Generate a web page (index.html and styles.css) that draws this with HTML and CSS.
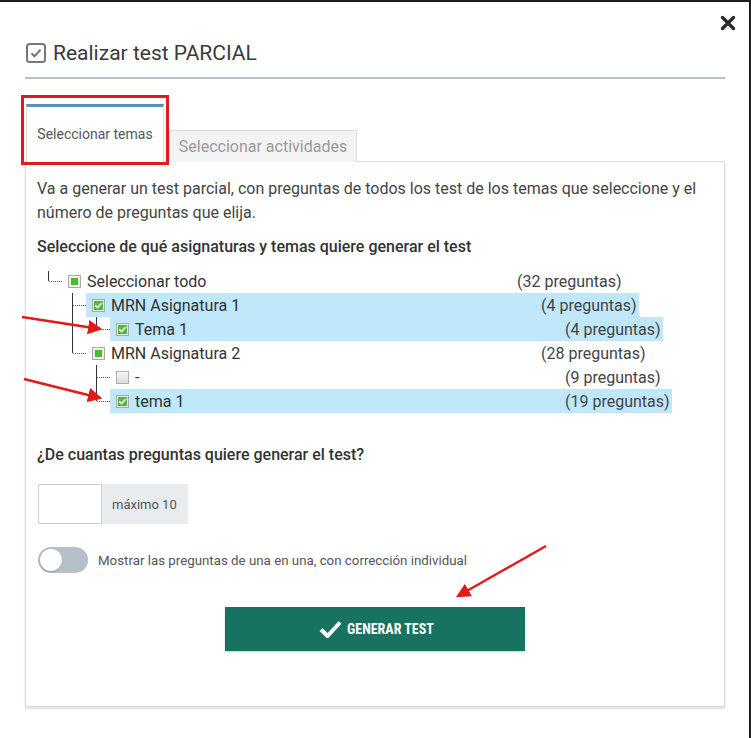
FILE: index.html
```html
<!DOCTYPE html>
<html lang="es">
<head>
  <meta charset="UTF-8">
  <title>Realizar test PARCIAL</title>
  <link rel="stylesheet" href="styles.css">
</head>
<body>

<button class="close" aria-label="Cerrar">
  <svg width="16" height="16" viewBox="0 0 16 16"><path d="M2.5 2.5L13.5 13.5M13.5 2.5L2.5 13.5" stroke="#2b2b2b" stroke-width="3.4" stroke-linecap="round"/></svg>
</button>

<div class="modal">
  <h1 class="modal-title">
    <svg width="20" height="20" viewBox="0 0 20 20"><rect x="1" y="1" width="18" height="18" rx="2.5" fill="none" stroke="#777" stroke-width="2"/><path d="M5.5 10.2l3 3 6-6.4" fill="none" stroke="#777" stroke-width="2"/></svg>
    Realizar test PARCIAL
  </h1>

  <div class="tabs">
    <div class="tab active">Seleccionar temas<span class="mark"></span></div>
    <div class="tab">Seleccionar actividades</div>
  </div>

  <div class="panel">
    <p class="intro">Va a generar un test parcial, con preguntas de todos los test de los temas que seleccione y el número de preguntas que elija.</p>
    <p class="label">Seleccione de qué asignaturas y temas quiere generar el test</p>

    <ul class="tree">
      <li class="row lvl0">
        <span class="conn root"></span>
        <span class="node">
          <svg class="cb" width="13" height="13" viewBox="0 0 13 13"><rect x=".5" y=".5" width="12" height="12" fill="#eee" stroke="#aaa"/><rect x="3" y="3" width="7" height="7" fill="#4cb833"/></svg>
          <span class="title">Seleccionar todo</span><span class="count">(32 preguntas)</span>
        </span>
      </li>
      <li class="row lvl1">
        <span class="conn"></span>
        <span class="node sel">
          <svg class="cb" width="13" height="13" viewBox="0 0 13 13"><rect x=".5" y=".5" width="12" height="12" fill="#e8e8e8" stroke="#aaa"/><rect x="2" y="2" width="9" height="9" fill="#52b738"/><path d="M3.3 6.3l2.3 2.3 4.2-4.6" fill="none" stroke="#fff" stroke-width="1.7"/></svg>
          <span class="title">MRN Asignatura 1</span><span class="count">(4 preguntas)</span>
        </span>
      </li>
      <li class="row lvl2">
        <span class="conn"></span>
        <span class="node sel">
          <svg class="cb" width="13" height="13" viewBox="0 0 13 13"><rect x=".5" y=".5" width="12" height="12" fill="#e8e8e8" stroke="#aaa"/><rect x="2" y="2" width="9" height="9" fill="#52b738"/><path d="M3.3 6.3l2.3 2.3 4.2-4.6" fill="none" stroke="#fff" stroke-width="1.7"/></svg>
          <span class="title">Tema 1</span><span class="count">(4 preguntas)</span>
        </span>
      </li>
      <li class="row lvl1">
        <span class="conn long"></span>
        <span class="node">
          <svg class="cb" width="13" height="13" viewBox="0 0 13 13"><rect x=".5" y=".5" width="12" height="12" fill="#eee" stroke="#aaa"/><rect x="3" y="3" width="7" height="7" fill="#4cb833"/></svg>
          <span class="title">MRN Asignatura 2</span><span class="count">(28 preguntas)</span>
        </span>
      </li>
      <li class="row lvl2">
        <span class="conn"></span>
        <span class="node">
          <svg class="cb" width="13" height="13" viewBox="0 0 13 13"><defs><linearGradient id="g" x1="0" y1="0" x2="0" y2="1"><stop offset="0" stop-color="#f7f7f7"/><stop offset="1" stop-color="#d9d9d9"/></linearGradient></defs><rect x=".5" y=".5" width="12" height="12" fill="url(#g)" stroke="#b0b0b0"/></svg>
          <span class="title">-</span><span class="count">(9 preguntas)</span>
        </span>
      </li>
      <li class="row lvl2">
        <span class="conn sib"></span>
        <span class="node sel">
          <svg class="cb" width="13" height="13" viewBox="0 0 13 13"><rect x=".5" y=".5" width="12" height="12" fill="#e8e8e8" stroke="#aaa"/><rect x="2" y="2" width="9" height="9" fill="#52b738"/><path d="M3.3 6.3l2.3 2.3 4.2-4.6" fill="none" stroke="#fff" stroke-width="1.7"/></svg>
          <span class="title">tema 1</span><span class="count">(19 preguntas)</span>
        </span>
      </li>
    </ul>

    <p class="label question">¿De cuantas preguntas quiere generar el test?</p>

    <div class="input-group">
      <input type="text" class="amount">
      <span class="addon">máximo 10</span>
    </div>

    <label class="switch-row">
      <span class="switch"><span class="knob"></span></span>
      Mostrar las preguntas de una en una, con corrección individual
    </label>

    <button class="generate">
      <svg width="23" height="18" viewBox="0 0 23 18"><path d="M2 9.5l6.5 6.5L21 2.5" fill="none" stroke="#fff" stroke-width="4"/></svg>
      GENERAR TEST
    </button>
  </div>
</div>

<!-- annotation arrows drawn over the screenshot -->
<svg class="arrows" width="751" height="738" viewBox="0 0 751 738">
  <defs>
    <marker id="head" markerWidth="6" markerHeight="6" refX="5" refY="3" orient="auto" markerUnits="strokeWidth">
      <path d="M0 0L6 3L0 6z" fill="#e11a1a"/>
    </marker>
  </defs>
  <line x1="22" y1="317" x2="100" y2="329" stroke="#e11a1a" stroke-width="2.4" marker-end="url(#head)"/>
  <line x1="24" y1="379" x2="100" y2="398" stroke="#e11a1a" stroke-width="2.4" marker-end="url(#head)"/>
  <line x1="546" y1="546" x2="458" y2="596" stroke="#e11a1a" stroke-width="2.4" marker-end="url(#head)"/>
</svg>

</body>
</html>
```

FILE: styles.css
```css
body {
  margin: 0;
  height: 738px;
  box-sizing: border-box;
  border-top: 2px solid #1e1e1e;
  border-right: 2px solid #1e1e1e;
  font-family: Roboto, 'Liberation Sans', sans-serif;
  color: #333;
  background: #fff;
  position: relative;
  overflow: hidden;
}
.close {
  position: absolute;
  top: 13px;
  right: 13px;
  padding: 0;
  border: none;
  background: none;
  width: 16px;
  height: 16px;
  cursor: pointer;
}
.close svg {
  display: block;
}
.modal {
  width: 700px;
  margin-left: 25px;
}
.modal-title {
  display: flex;
  align-items: center;
  gap: 7px;
  margin: 0;
  padding: 36px 0 9px 1px;
  font-size: 21px;
  line-height: 30px;
  font-weight: 400;
  color: #3a3a3a;
  border-bottom: 2px solid #b6c1c9;
}
.tabs {
  display: flex;
  align-items: flex-end;
  gap: 5px;
  margin: 25px 0 -1px 1px;
  position: relative;
  z-index: 1;
}
.tab {
  height: 32px;
  padding: 0 8px;
  box-sizing: border-box;
  display: flex;
  align-items: center;
  justify-content: center;
  border: 1px solid #dcdcdc;
  border-bottom: none;
  background: #f3f3f3;
  font-size: 16px;
  color: #9a9a9a;
  width: 188px;
}
.tab.active {
  position: relative;
  width: 138px;
  height: 58px;
  border-top: 3px solid #5d8fbd;
  background: #fff;
  font-size: 14px;
  color: #555;
  padding-bottom: 2px;
}
.mark {
  position: absolute;
  left: -6px;
  top: -12px;
  width: 148px;
  height: 70px;
  box-sizing: border-box;
  border: 3px solid #e01b22;
}
.panel {
  border: 1px solid #dcdcdc;
  box-shadow: 0 2px 2px rgba(0, 0, 0, 0.13);
  padding: 15px 11px 55px 11px;
}
.intro {
  margin: 0;
  font-size: 16px;
  line-height: 24px;
  color: #444;
}
.label {
  margin: 10px 0 0;
  font-size: 16px;
  line-height: 24px;
  font-weight: 500;
  color: #333;
}
.tree {
  list-style: none;
  margin: 10px 0 0;
  padding: 0;
}
.row {
  display: flex;
  align-items: center;
  height: 24px;
  padding-left: 9px;
}
.row.lvl1 {
  padding-left: 33px;
}
.row.lvl2 {
  padding-left: 57px;
}
.conn {
  position: relative;
  flex: none;
  width: 16px;
  height: 24px;
}
.conn::before {
  content: "";
  position: absolute;
  left: 2px;
  top: 0;
  height: 12px;
  border-left: 1px solid #333;
}
.conn::after {
  content: "";
  position: absolute;
  left: 3px;
  top: 12px;
  width: 13px;
  border-top: 1px dotted #555;
}
.conn.root::before {
  top: 2px;
  height: 10px;
}
.conn.long::before {
  top: -36px;
  height: 48px;
}
.conn.sib::before {
  top: -12px;
  height: 24px;
}
.node {
  display: flex;
  align-items: center;
  height: 24px;
  padding: 0 2px 0 6px;
  font-size: 16px;
  white-space: nowrap;
}
.node.sel {
  background: #c1e7fa;
}
.cb {
  flex: none;
  margin-right: 6px;
}
.title {
  width: 430px;
  color: #333;
}
.count {
  color: #444;
}
.question {
  margin-top: 30px;
}
.input-group {
  display: flex;
  width: 150px;
  height: 40px;
  margin: 17px 0 0 1px;
}
.amount {
  width: 64px;
  box-sizing: border-box;
  margin: 0;
  border: 1px solid #cfcfcf;
  background: #fff;
}
.addon {
  flex: 1;
  display: flex;
  align-items: center;
  padding-left: 10px;
  background: #e8ecef;
  font-size: 13px;
  color: #555;
}
.switch-row {
  display: flex;
  align-items: center;
  gap: 10px;
  margin: 23px 0 0 1px;
  height: 26px;
  font-size: 13.3px;
  color: #555;
}
.switch {
  position: relative;
  width: 50px;
  height: 26px;
  border-radius: 13px;
  background: #b5c0c9;
}
.knob {
  position: absolute;
  left: 2px;
  top: 2px;
  width: 22px;
  height: 22px;
  border-radius: 50%;
  background: #fff;
  box-shadow: 0 1px 2px rgba(0, 0, 0, 0.2);
}
.generate {
  display: flex;
  align-items: center;
  justify-content: center;
  gap: 5px;
  width: 300px;
  height: 44px;
  margin: 34px auto 0;
  padding: 0 0 0 3px;
  border: none;
  background: #17735f;
  color: #fff;
  font-family: 'Roboto Condensed', 'Liberation Sans Narrow', Roboto, sans-serif;
  font-size: 14px;
  font-weight: 700;
  box-shadow: 0 1px 2px rgba(0, 0, 0, 0.2);
  cursor: pointer;
}
.arrows {
  position: absolute;
  left: 0;
  top: -2px;
  pointer-events: none;
}
```
